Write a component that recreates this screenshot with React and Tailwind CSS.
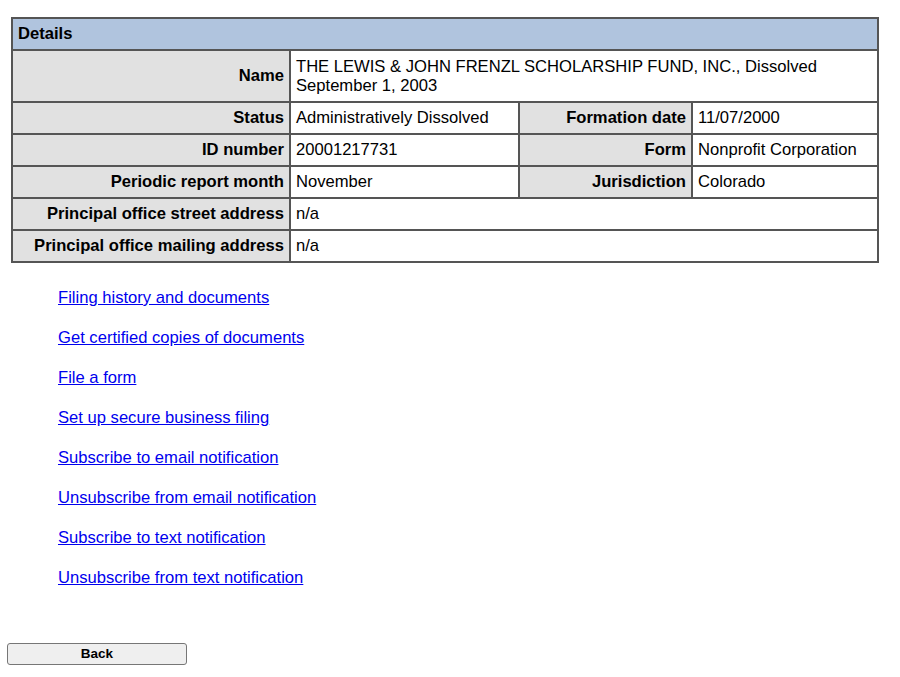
export default function App() {
    const links = [
        'Filing history and documents',
        'Get certified copies of documents',
        'File a form',
        'Set up secure business filing',
        'Subscribe to email notification',
        'Unsubscribe from email notification',
        'Subscribe to text notification',
        'Unsubscribe from text notification',
    ];

    const label = 'border-2 border-[#555] bg-[#e1e1e1] px-[5px] py-[6px] text-right font-bold';
    const value = 'border-2 border-[#555] bg-white px-[5px] py-[6px] text-left';

    return (
        <div className="min-h-[677px] bg-white text-[16.6px] leading-[18px] text-black" style={{ fontFamily: '"Liberation Sans", Arial, sans-serif' }}>
            <div className="pl-[11px] pt-[17px]">
                <table className="w-[866px] table-fixed border-collapse">
                    <colgroup>
                        <col className="w-[278px]" />
                        <col className="w-[229px]" />
                        <col className="w-[173px]" />
                        <col className="w-[186px]" />
                    </colgroup>
                    <tbody>
                        <tr>
                            <th colSpan={4} className="border-2 border-[#555] bg-[#b0c4de] px-[5px] py-[6px] text-left font-bold">
                                Details
                            </th>
                        </tr>
                        <tr>
                            <td className={label}>Name</td>
                            <td colSpan={3} className={`${value} leading-[19px]`}>
                                THE LEWIS &amp; JOHN FRENZL SCHOLARSHIP FUND, INC., Dissolved September 1, 2003
                            </td>
                        </tr>
                        <tr>
                            <td className={label}>Status</td>
                            <td className={value}>Administratively Dissolved</td>
                            <td className={label}>Formation date</td>
                            <td className={value}>11/07/2000</td>
                        </tr>
                        <tr>
                            <td className={label}>ID number</td>
                            <td className={value}>20001217731</td>
                            <td className={label}>Form</td>
                            <td className={value}>Nonprofit Corporation</td>
                        </tr>
                        <tr>
                            <td className={label}>Periodic report month</td>
                            <td className={value}>November</td>
                            <td className={label}>Jurisdiction</td>
                            <td className={value}>Colorado</td>
                        </tr>
                        <tr>
                            <td className={label}>Principal office street address</td>
                            <td colSpan={3} className={value}>n/a</td>
                        </tr>
                        <tr>
                            <td className={label}>Principal office mailing address</td>
                            <td colSpan={3} className={value}>n/a</td>
                        </tr>
                    </tbody>
                </table>
            </div>

            <div className="ml-[58px] mt-[26px] flex flex-col items-start gap-[22px]">
                {links.map((text) => (
                    <a key={text} href="#" className="text-[#0000ee] underline">
                        {text}
                    </a>
                ))}
            </div>

            <div className="ml-[7px] mt-[56px]">
                <button
                    type="button"
                    className="h-[22px] w-[180px] rounded-[3px] border border-[#767676] bg-[#efefef] text-[13.5px] font-bold text-black"
                >
                    Back
                </button>
            </div>
        </div>
    );
}
